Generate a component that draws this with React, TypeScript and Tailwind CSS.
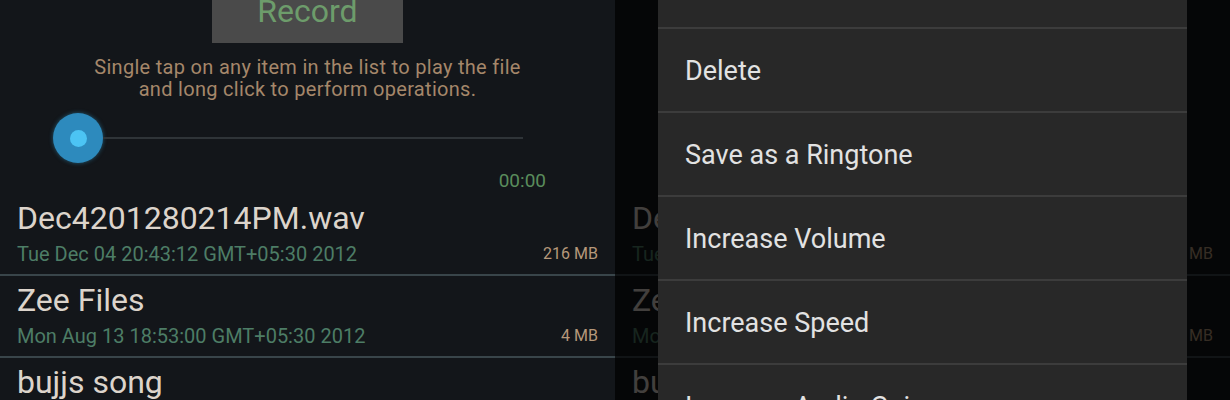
import React from 'react';

const FILES = [
	{ name: 'Dec4201280214PM.wav', date: 'Tue Dec 04 20:43:12 GMT+05:30 2012', size: '216 MB' },
	{ name: 'Zee Files', date: 'Mon Aug 13 18:53:00 GMT+05:30 2012', size: '4 MB' },
	{ name: 'bujjs song', date: 'Sun Jul 22 11:05:41 GMT+05:30 2012', size: '3 MB' },
];

const MENU = ['Delete', 'Save as a Ringtone', 'Increase Volume', 'Increase Speed', 'Increase Audio Gain'];

function RecorderScreen() {
	return (
		<div className="w-[615px] h-[400px] overflow-hidden bg-[#13161a] flex flex-col font-['Roboto','Liberation_Sans',sans-serif]">
			{/* Record button, cut off at top */}
			<div className="flex justify-center">
				<div className="w-[191px] h-[43px] bg-[#4a4a4a] flex justify-center items-start overflow-hidden">
					<span className="text-[32px] leading-none -mt-[5px] text-[#6d9c6b]">Record</span>
				</div>
			</div>

			<p className="mt-[13px] text-center text-[20px] tracking-[0.3px] leading-[22px] text-[#a5876a]">
				Single tap on any item in the list to play the file
				<br />
				and long click to perform operations.
			</p>

			{/* Seek bar */}
			<div className="mt-[13px] h-[50px] flex items-center pl-[53px] pr-[92px]">
				<div className="w-[50px] h-[50px] rounded-full bg-[#2d8abd] flex items-center justify-center shrink-0 shadow-[0_0_4px_rgba(51,160,210,0.5)]">
					<div className="w-[17px] h-[17px] rounded-full bg-[#4cc4f4]" />
				</div>
				<div className="flex-1 h-[2px] bg-[#2f3438]" />
			</div>

			<div className="mt-[8px] text-right pr-[69px] text-[19px] leading-[20px] text-[#5a8c5c]">00:00</div>

			<div className="mt-[3px]">
				{FILES.map((f) => (
					<div key={f.name} className="px-[17px] pt-[8px] border-b-2 border-[#39454a]">
						<div className="text-[32px] leading-[32px] text-[#dcd4cb] whitespace-nowrap">{f.name}</div>
						<div className="mt-[8px] pb-[8px] flex items-center justify-between leading-[24px]">
							<span className="text-[20px] text-[#4d7d66] whitespace-nowrap">{f.date}</span>
							<span className="text-[16px] text-[#b5987a]">{f.size}</span>
						</div>
					</div>
				))}
			</div>
		</div>
	);
}

export default function App() {
	return (
		<div className="w-[1230px] h-[400px] flex bg-[#060708] overflow-hidden font-['Roboto','Liberation_Sans',sans-serif]">
			<RecorderScreen />

			{/* Second screen: long-press menu over dimmed list */}
			<div className="relative w-[615px] h-[400px] overflow-hidden">
				<RecorderScreen />
				<div className="absolute inset-0 bg-black/70" />
				<div className="absolute left-[43px] top-0 w-[529px] h-full bg-[#282828] flex flex-col">
					<div className="h-[29px] shrink-0 border-b-2 border-[#3c3c3c]" />
					{MENU.map((item) => (
						<div
							key={item}
							className="h-[84px] shrink-0 border-b-2 border-[#3c3c3c] flex items-center pl-[27px] pt-[3px] text-[27px] text-[#e2e2e2]"
						>
							{item}
						</div>
					))}
				</div>
			</div>
		</div>
	);
}
